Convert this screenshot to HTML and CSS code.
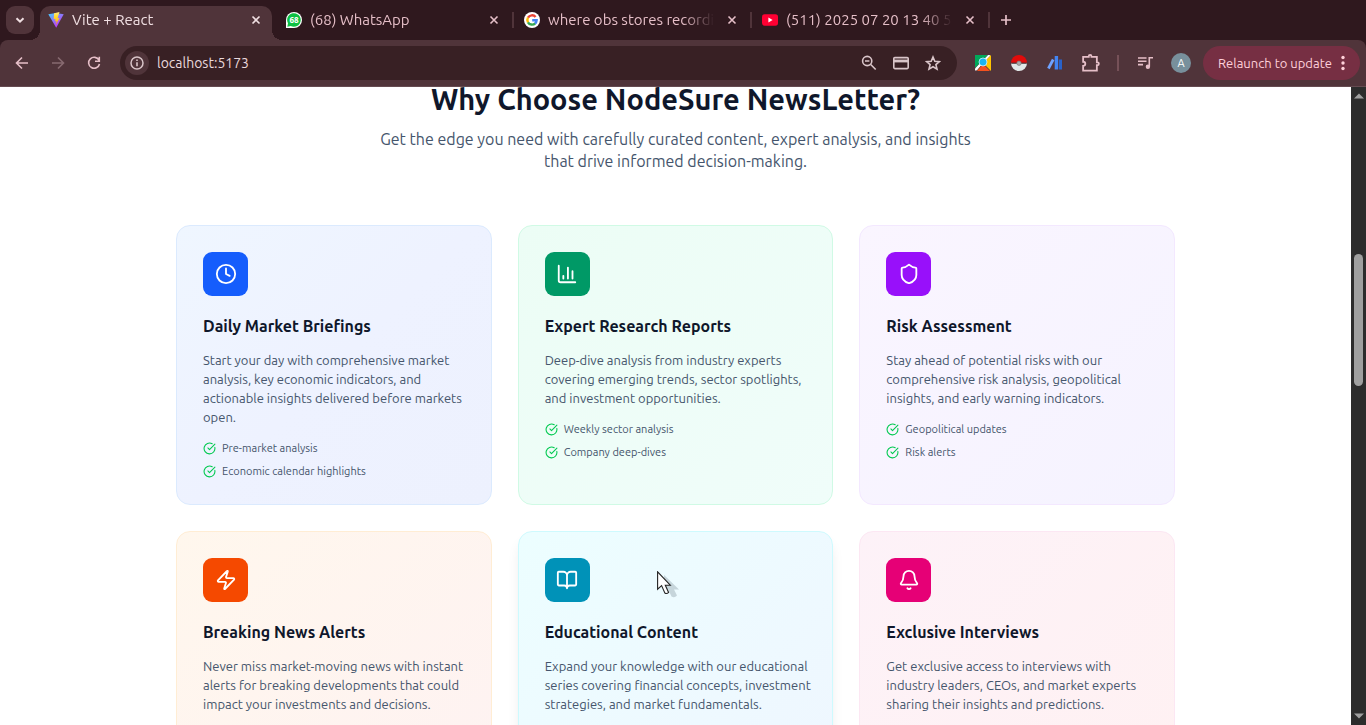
FILE: index.html
```html
<!DOCTYPE html>
<html lang="en">
<head>
<meta charset="utf-8">
<title>Vite + React</title>
<link rel="stylesheet" href="styles.css">
</head>
<body>
<div class="browser">
  <header class="tabstrip">
    <button class="tab-search" aria-label="Search tabs"><svg width="12" height="12" viewBox="0 0 12 12"><path d="M2.500 4.200 6 7.700l3.500-3.500" fill="none" stroke="currentColor" stroke-width="2"/></svg></button>
    <nav class="tabs" aria-label="Tabs">
      <div class="tab active">
        <svg class="favicon" viewBox="0 0 16 16"><defs><linearGradient id="vp" x1="0" y1="0" x2=".7" y2="1"><stop offset="0" stop-color="#41d1ff"/><stop offset=".7" stop-color="#a855f7"/><stop offset="1" stop-color="#bd34fe"/></linearGradient><linearGradient id="vy" x1="0" y1="0" x2="0" y2="1"><stop offset="0" stop-color="#ffea83"/><stop offset=".3" stop-color="#ffdd35"/><stop offset="1" stop-color="#ffa800"/></linearGradient></defs><path d="M.3 2.300 8 .9l7.700 1.400L8.200 15.700z" fill="url(#vp)"/><path d="m11.500.1-5.400 1.100-.4 6 1.800-.4-.5 2.700 1.600-.5-.8 4 3.700-7-1.900.3z" fill="url(#vy)"/></svg>
        <span class="tab-title">Vite + React</span>
        <button class="tab-close" aria-label="Close tab"><svg viewBox="0 0 16 16"><path d="m4.500 4.500 7 7m0-7-7 7"/></svg></button>
      </div>
      <span class="tab-sep hidden"></span>
      <div class="tab">
        <svg class="favicon" viewBox="0 0 16 16"><path d="M0 16V8a8 8 0 1 1 8 8z" fill="#fff"/><path d="M1.300 14.700 2 11.300A6.800 6.800 0 1 1 4.800 14z" fill="#0dc143"/><text x="8" y="10.900" text-anchor="middle" class="badge-text">68</text></svg>
        <span class="tab-title">(68) WhatsApp</span>
        <button class="tab-close" aria-label="Close tab"><svg viewBox="0 0 16 16"><path d="m4.500 4.500 7 7m0-7-7 7"/></svg></button>
      </div>
      <span class="tab-sep"></span>
      <div class="tab">
        <svg class="favicon" viewBox="0 0 16 16"><circle cx="8" cy="8" r="8" fill="#fff"/><g fill="none" stroke-width="2.400"><path d="M11.600 5A4.600 4.600 0 0 0 4 5.700" stroke="#ea4335"/><path d="M4 5.700a4.600 4.600 0 0 0 0 4.600" stroke="#fbbc05"/><path d="M4 10.300a4.600 4.600 0 0 0 7.200 1" stroke="#34a853"/><path d="M8.200 8.300h4.400a4.600 4.600 0 0 1-1.600 3.200" stroke="#4285f4"/></g></svg>
        <span class="tab-title">where obs stores recordings</span>
        <button class="tab-close" aria-label="Close tab"><svg viewBox="0 0 16 16"><path d="m4.500 4.500 7 7m0-7-7 7"/></svg></button>
      </div>
      <span class="tab-sep"></span>
      <div class="tab">
        <svg class="favicon" viewBox="0 0 16 16"><rect y="2.300" width="16" height="11.400" rx="2.600" fill="#f03"/><path d="M6.400 5.600v4.800L10.600 8z" fill="#fff"/></svg>
        <span class="tab-title">(511) 2025 07 20 13 40 52</span>
        <button class="tab-close" aria-label="Close tab"><svg viewBox="0 0 16 16"><path d="m4.500 4.500 7 7m0-7-7 7"/></svg></button>
      </div>
      <span class="tab-sep"></span>
    </nav>
    <button class="new-tab" aria-label="New tab"><svg width="12" height="12" viewBox="0 0 12 12"><path d="M6 1v10M1 6h10" stroke="currentColor" stroke-width="1.700"/></svg></button>
  </header>

  <div class="toolbar">
    <button class="tool" aria-label="Back"><svg viewBox="0 0 16 16"><path d="M14 8H3M8 2.500 2.500 8 8 13.500"/></svg></button>
    <button class="tool dim" aria-label="Forward"><svg viewBox="0 0 16 16"><path d="M2 8h11M8 2.500 13.500 8 8 13.500"/></svg></button>
    <button class="tool" aria-label="Reload"><svg viewBox="0 0 16 16"><path d="M13 5.200A5.500 5.500 0 1 0 13.500 9M13.300 1.800v4.400H9"/></svg></button>
    <div class="omnibox">
      <button class="site-info" aria-label="Site information"><svg width="14" height="14" viewBox="0 0 14 14"><circle cx="7" cy="7" r="6" fill="none" stroke="currentColor" stroke-width="1.500"/><path d="M7 6.200v4M7 3.500v1.600" stroke="currentColor" stroke-width="1.600"/></svg></button>
      <input class="url" type="text" aria-label="Address" value="localhost:5173">
      <button class="omni-action" aria-label="Zoom"><svg viewBox="0 0 16 16"><circle cx="6.200" cy="6" r="4.600"/><path d="m9.700 9.500 5 5M4 6h4.400"/></svg></button>
      <button class="omni-action" aria-label="Payment methods"><svg viewBox="0 0 16 16"><rect x=".8" y="2.600" width="14.400" height="11" rx="1"/><path d="M1 6h14" stroke-width="2.800"/></svg></button>
      <button class="omni-action" aria-label="Bookmark"><svg viewBox="0 0 16 16"><path d="m8 2 1.800 4.200 4.600.4-3.500 3 1.100 4.500L8 11.700l-4 2.400 1.100-4.500-3.500-3 4.600-.4z"/></svg></button>
    </div>
    <button class="tool" aria-label="Search extension"><svg class="plain" viewBox="0 0 16 16"><path fill="#00a85a" d="M0 0h13L0 13z"/><path fill="#ffc400" d="M16 0v16L8 8z"/><path fill="#f4511e" d="M2 16 8 9l7 7z"/><path stroke="#fff" stroke-width="2" d="M14.500 0 0 15"/><circle cx="8" cy="7" r="4" fill="#19b5f1" stroke="#d5f3ff" stroke-width=".8"/><path stroke="#fff" stroke-width="2" d="m5 10-4 5"/></svg></button>
    <button class="tool" aria-label="Pokeball extension"><svg class="plain" viewBox="0 0 16 16"><path fill="#e10b0b" d="M0 8a8 8 0 0 1 16 0z"/><path fill="#e1e8e8" d="M0 8a8 8 0 0 0 16 0z"/><path stroke="#493438" stroke-width="1.200" d="M.2 8.200h15.600"/><circle cx="8" cy="8.200" r="2.200" fill="#aaa" stroke="#777" stroke-width=".7"/></svg></button>
    <button class="tool" aria-label="Analytics extension"><svg class="plain" viewBox="0 0 16 16"><path stroke="#6fa2ff" stroke-width="2.800" d="m1.400 13.500 4.800-9"/><path fill="#4285f4" d="M7.700 1h3.400v13.500H7.700z"/><path fill="#2962c9" d="M11.800 4.500H15v10h-3.200z"/></svg></button>
    <button class="tool" aria-label="Extensions"><svg class="puzzle" viewBox="0 0 16 16"><path d="M1 2.500h5V2a1.200 1.200 0 0 1 2.400 0v.5h4.800v4.900h.5a1.300 1.300 0 0 1 0 2.600h-.5v4.800H1v-4.200c2.600 0 2.600-3.700 0-3.700z"/></svg></button>
    <span class="tool-sep"></span>
    <button class="tool" aria-label="Media controls"><svg viewBox="0 0 16 16"><path d="M1 3h8.500M1 6.300h8.500M1 9.600h5M12.300 11.500V2.800H16"/><circle cx="10.900" cy="11.800" r="1.400" fill="currentColor"/></svg></button>
    <button class="tool" aria-label="Profile"><span class="avatar">A</span></button>
    <button class="relaunch">Relaunch to update<svg width="4" height="16" viewBox="0 0 4 16" fill="currentColor"><circle cx="2" cy="2.500" r="1.700"/><circle cx="2" cy="8" r="1.700"/><circle cx="2" cy="13.500" r="1.700"/></svg></button>
  </div>

  <div class="viewport">
    <main class="page">
      <section class="features">
        <h2>Why Choose NodeSure NewsLetter?</h2>
        <p class="lead">Get the edge you need with carefully curated content, expert analysis, and insights<br>that drive informed decision-making.</p>
        <div class="grid">
          <article class="card blue">
            <div class="card-icon"><svg viewBox="0 0 24 24"><circle cx="12" cy="12" r="10"/><path d="M12 6v6l4 2"/></svg></div>
            <h3>Daily Market Briefings</h3>
            <p>Start your day with comprehensive market<br>analysis, key economic indicators, and<br>actionable insights delivered before markets<br>open.</p>
            <ul>
              <li><svg viewBox="0 0 24 24"><path d="M21.801 10A10 10 0 1 1 17 3.335"/><path d="m9 11 3 3L22 4"/></svg>Pre-market analysis</li>
              <li><svg viewBox="0 0 24 24"><path d="M21.801 10A10 10 0 1 1 17 3.335"/><path d="m9 11 3 3L22 4"/></svg>Economic calendar highlights</li>
            </ul>
          </article>
          <article class="card green">
            <div class="card-icon"><svg viewBox="0 0 24 24"><path d="M3 3v16a2 2 0 0 0 2 2h16M18 17V9M13 17V5M8 17v-3"/></svg></div>
            <h3>Expert Research Reports</h3>
            <p>Deep-dive analysis from industry experts<br>covering emerging trends, sector spotlights,<br>and investment opportunities.</p>
            <ul>
              <li><svg viewBox="0 0 24 24"><path d="M21.801 10A10 10 0 1 1 17 3.335"/><path d="m9 11 3 3L22 4"/></svg>Weekly sector analysis</li>
              <li><svg viewBox="0 0 24 24"><path d="M21.801 10A10 10 0 1 1 17 3.335"/><path d="m9 11 3 3L22 4"/></svg>Company deep-dives</li>
            </ul>
          </article>
          <article class="card purple">
            <div class="card-icon"><svg viewBox="0 0 24 24"><path d="M20 13c0 5-3.500 7.500-7.660 8.950a1 1 0 0 1-.67-.01C7.500 20.500 4 18 4 13V6a1 1 0 0 1 1-1c2 0 4.500-1.200 6.240-2.720a1.170 1.170 0 0 1 1.520 0C14.510 3.810 17 5 19 5a1 1 0 0 1 1 1z"/></svg></div>
            <h3>Risk Assessment</h3>
            <p>Stay ahead of potential risks with our<br>comprehensive risk analysis, geopolitical<br>insights, and early warning indicators.</p>
            <ul>
              <li><svg viewBox="0 0 24 24"><path d="M21.801 10A10 10 0 1 1 17 3.335"/><path d="m9 11 3 3L22 4"/></svg>Geopolitical updates</li>
              <li><svg viewBox="0 0 24 24"><path d="M21.801 10A10 10 0 1 1 17 3.335"/><path d="m9 11 3 3L22 4"/></svg>Risk alerts</li>
            </ul>
          </article>
          <article class="card orange">
            <div class="card-icon"><svg viewBox="0 0 24 24"><path d="M4 14a1 1 0 0 1-.78-1.630l9.900-10.200a.5.5 0 0 1 .86.460l-1.920 6.020A1 1 0 0 0 13 10h7a1 1 0 0 1 .78 1.630l-9.900 10.200a.5.5 0 0 1-.86-.460l1.920-6.020A1 1 0 0 0 11 14z"/></svg></div>
            <h3>Breaking News Alerts</h3>
            <p>Never miss market-moving news with instant<br>alerts for breaking developments that could<br>impact your investments and decisions.</p>
          </article>
          <article class="card cyan raised">
            <div class="card-icon"><svg viewBox="0 0 24 24"><path d="M12 7v14M3 18a1 1 0 0 1-1-1V4a1 1 0 0 1 1-1h5a4 4 0 0 1 4 4 4 4 0 0 1 4-4h5a1 1 0 0 1 1 1v13a1 1 0 0 1-1 1h-6a3 3 0 0 0-3 3 3 3 0 0 0-3-3z"/></svg></div>
            <h3>Educational Content</h3>
            <p>Expand your knowledge with our educational<br>series covering financial concepts, investment<br>strategies, and market fundamentals.</p>
          </article>
          <article class="card pink">
            <div class="card-icon"><svg viewBox="0 0 24 24"><path d="M10.268 21a2 2 0 0 0 3.464 0M3.262 15.326A1 1 0 0 0 4 17h16a1 1 0 0 0 .74-1.673C19.410 13.956 18 12.499 18 8A6 6 0 0 0 6 8c0 4.499-1.411 5.956-2.738 7.326"/></svg></div>
            <h3>Exclusive Interviews</h3>
            <p>Get exclusive access to interviews with<br>industry leaders, CEOs, and market experts<br>sharing their insights and predictions.</p>
          </article>
        </div>
      </section>
    </main>
    <div class="scrollbar">
      <svg class="arrow" viewBox="0 0 10 6"><path d="M0 5.500 5 .5l5 5z"/></svg>
      <div class="track"><div class="thumb"></div></div>
      <svg class="arrow" viewBox="0 0 10 6"><path d="M0 .5h10l-5 5z"/></svg>
    </div>
  </div>
  <svg class="cursor" viewBox="0 0 24 30"><path d="M7 4v17l4-3 3.500 7.500q3 2 5.500-1l-3-6h5z" fill="#60737c" opacity=".28"/><path d="M.6.8v17.400l4-3.600 3.200 7.400q2 1.300 3.800-.6l-3.300-7.200h5z" fill="#fff" stroke="#222" stroke-width="1.100"/></svg>
</div>
</body>
</html>
```

FILE: styles.css
```css
* { box-sizing: border-box; }
body { margin: 0; background: #fff; font-family: Ubuntu, "Noto Sans", "Open Sans", sans-serif; }
button { margin: 0; padding: 0; border: 0; background: none; color: inherit; font: inherit; }
h2, h3, p, ul { margin: 0; padding: 0; }
svg { display: block; flex: none; }

.browser { position: relative; display: flex; flex-direction: column; height: 100vh; overflow: hidden; background: #2f181e; color: #e6bfc8; }

.tabstrip { display: flex; align-items: flex-end; height: 40px; padding-left: 6px; }
.tab-search { display: grid; place-items: center; width: 28px; height: 28px; margin: 0 6px 6px 0; border-radius: 9px; background: #50343a; color: #f0dfe2; }
.tabs { display: flex; align-items: center; }
.tab { position: relative; display: flex; align-items: center; gap: 8px; width: 232px; height: 34px; padding: 0 8px 6px; }
.tab.active { background: #50343a; border-radius: 10px 10px 0 0; color: #f0dfe2; }
.tab.active::before, .tab.active::after { content: ""; position: absolute; bottom: 0; width: 10px; height: 10px; }
.tab.active::before { right: 100%; background: radial-gradient(circle at 0 0, transparent 10px, #50343a 10px); }
.tab.active::after { left: 100%; background: radial-gradient(circle at 100% 0, transparent 10px, #50343a 10px); }
.favicon { width: 16px; height: 16px; }
.badge-text { font: 700 8px "Open Sans", sans-serif; fill: #fff; }
.tab-title { flex: 1; min-width: 0; overflow: hidden; white-space: nowrap; font-size: 15px; line-height: 20px; mask-image: linear-gradient(90deg, #000 80%, transparent 99%); }
.tab-close { width: 16px; height: 16px; }
.tab-close svg { width: 16px; height: 16px; stroke: currentColor; stroke-width: 1.6; }
.tab-sep { width: 2px; height: 16px; margin: 0 2px 6px; background: #50343a; }
.tab-sep.hidden { visibility: hidden; }
.new-tab { display: grid; place-items: center; width: 28px; height: 28px; margin-bottom: 6px; }

.toolbar { display: flex; align-items: center; gap: 8px; height: 47px; padding: 0 6px 0 8px; background: #50343a; border-bottom: 1px solid #654b51; border-radius: 8px 8px 0 0; }
.tool { display: grid; place-items: center; width: 28px; height: 28px; flex: none; }
.tool svg { width: 16px; height: 16px; fill: none; stroke: currentColor; stroke-width: 1.6; }
.tool svg.plain { stroke: none; }
.tool svg.puzzle { width: 18px; height: 18px; }
.tool.dim { color: #876a70; }
.tool-sep { width: 10px; height: 16px; border: 0 solid transparent; border-width: 0 4px; background: #765158; background-clip: padding-box; }
.avatar { display: grid; place-items: center; width: 20px; height: 20px; border-radius: 50%; background: #78909c; color: #fff; font-size: 11px; line-height: 20px; }
.omnibox { display: flex; align-items: center; flex: 1; min-width: 0; height: 34px; margin: 0 4px; padding: 0 8px 0 5px; border-radius: 17px; background: #382024; color: #d9c5c9; }
.site-info { display: grid; place-items: center; width: 24px; height: 24px; border-radius: 50%; background: #50343a; }
.url { flex: 1; min-width: 0; margin: 0 8px; padding: 0; border: 0; outline: 0; background: none; color: #ead9dc; font: 14px/20px Ubuntu, "Noto Sans", sans-serif; }
.omni-action { display: grid; place-items: center; width: 32px; height: 28px; }
.omni-action svg { width: 16px; height: 16px; fill: none; stroke: currentColor; stroke-width: 1.6; }
.relaunch { display: flex; align-items: center; justify-content: space-between; width: 157px; height: 34px; flex: none; padding: 0 15px; border-radius: 17px; background: #762f43; color: #ffd0da; font-size: 13px; white-space: nowrap; }

.viewport { display: flex; flex: 1; min-height: 0; background: #fff; }
.page { flex: 1; min-width: 0; overflow: hidden; color: #45556c; }
.features { max-width: 999px; margin: -6px auto 0; }
.features h2 { color: #0f172b; font-size: 29px; font-weight: 600; line-height: 36px; text-align: center; }
.lead { margin: 11px 0 53px; font-size: 16px; line-height: 22px; text-align: center; }
.grid { display: grid; grid-template-columns: repeat(3, minmax(0, 1fr)); grid-auto-rows: 1fr; gap: 26px; }
.card { padding: 26px 26px 25px; border: 1px solid; border-radius: 14px; }
.card-icon { display: grid; place-items: center; width: 45px; height: 44px; margin-bottom: 18px; border-radius: 9px; }
.card-icon svg { width: 22px; height: 22px; fill: none; stroke: #fff; stroke-width: 2; stroke-linecap: round; stroke-linejoin: round; }
.card h3 { margin-bottom: 13px; color: #0f172b; font-size: 16px; font-weight: 600; line-height: 24px; white-space: nowrap; }
.card p { margin-bottom: 14px; font-size: 13px; line-height: 19px; white-space: nowrap; }
.card ul { display: flex; flex-direction: column; gap: 8px; list-style: none; }
.card li { display: flex; align-items: center; gap: 6px; font-size: 11px; line-height: 15px; }
.card li svg { width: 13px; height: 13px; fill: none; stroke: #00c950; stroke-width: 2; stroke-linecap: round; stroke-linejoin: round; }
.blue { border-color: #dbeafe; background: linear-gradient(135deg, #eff6ff, #eef2ff 50%, #edf1fe); }
.blue .card-icon { background: #155dfc; }
.green { border-color: #d0fae5; background: linear-gradient(135deg, #ecfdf5, #f0fdfa); }
.green .card-icon { background: #009966; }
.purple { border-color: #f3e8ff; background: linear-gradient(135deg, #faf5ff, #f5f3ff); }
.purple .card-icon { background: #9810fa; }
.orange { border-color: #ffedd4; background: linear-gradient(135deg, #fff7ed, #fef2f2); }
.orange .card-icon { background: #f54900; }
.cyan { border-color: #cefafe; background: linear-gradient(135deg, #ecfeff, #eff6ff); }
.cyan .card-icon { background: #0092b8; }
.pink { border-color: #fce7f3; background: linear-gradient(135deg, #fdf2f8, #fff1f2); }
.pink .card-icon { background: #e60076; }
.raised { box-shadow: 0 9px 14px -3px rgb(0 0 0 / 10%), 0 4px 5px -4px rgb(0 0 0 / 10%); }

.scrollbar { display: flex; flex-direction: column; align-items: center; width: 15px; padding: 6px 0; background: #2c2c2c; }
.arrow { width: 10px; height: 6px; fill: #9f9f9f; }
.track { display: flex; flex-direction: column; align-items: center; flex: 1; width: 100%; padding-top: 155px; }
.thumb { width: 9px; height: 132px; border-radius: 5px; background: #9f9f9f; }
.cursor { position: absolute; left: 657px; top: 571px; width: 24px; height: 30px; }
```
